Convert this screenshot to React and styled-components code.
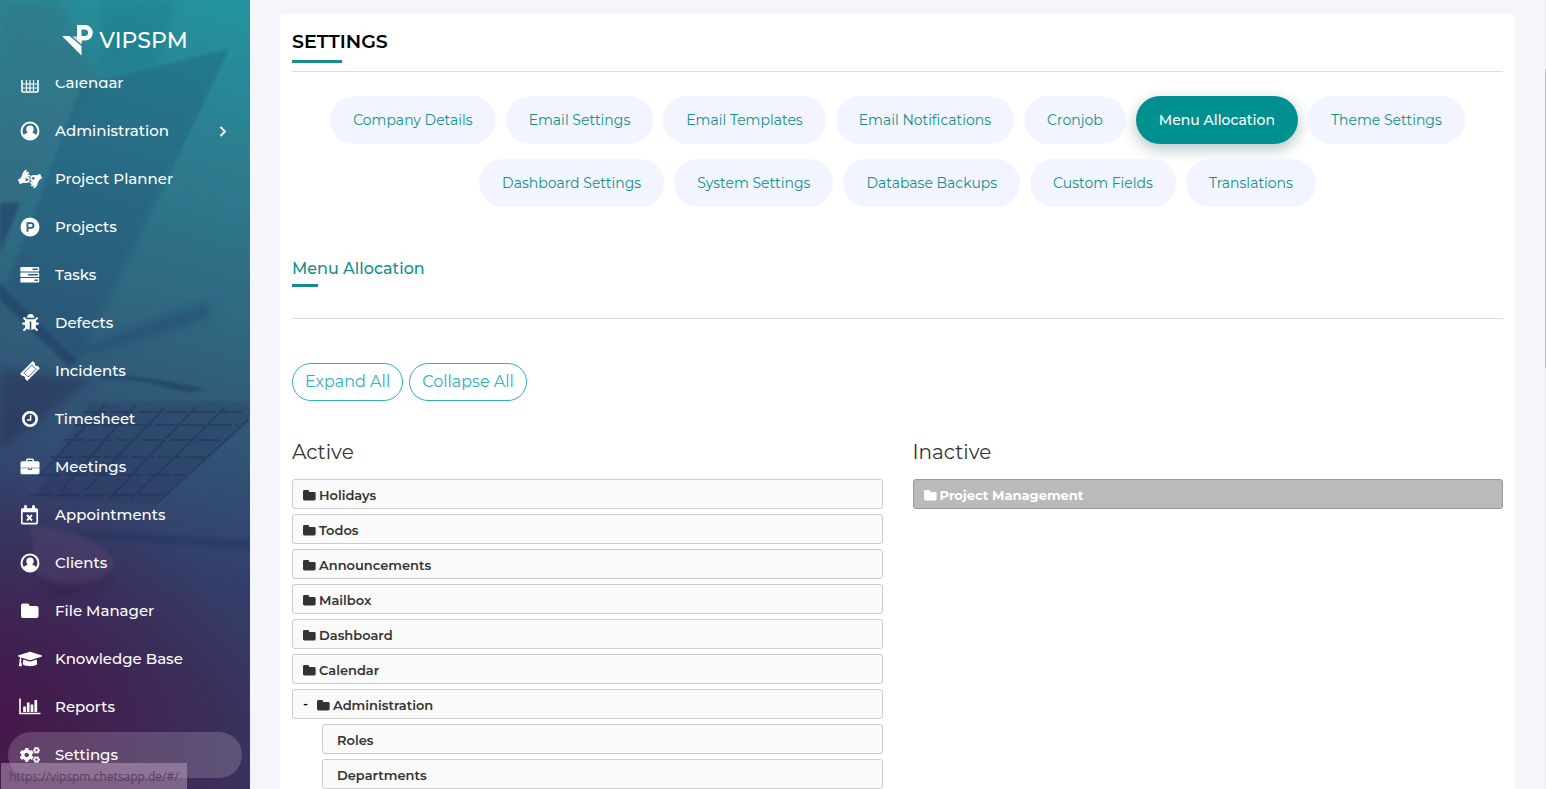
import { useState } from "react";
import styled, { createGlobalStyle } from "styled-components";
import {
  FaBug,
  FaGraduationCap,
  FaCogs,
  FaAmericanSignLanguageInterpreting,
} from "react-icons/fa";

const GlobalStyle = createGlobalStyle`
  * {
    box-sizing: border-box;
  }
  body {
    margin: 0;
    background: #f5f6fb;
    color: #333;
    font-family: Montserrat, Inter, "Liberation Sans", sans-serif;
    font-size: 15px;
    overflow: hidden;
  }
  ul {
    margin: 0;
    padding: 0;
    list-style: none;
  }
  button {
    font-family: inherit;
    cursor: pointer;
  }
`;

const Layout = styled.div`
  display: flex;
  height: 100vh;
`;

const Sidebar = styled.aside`
  position: relative;
  flex: 0 0 250px;
  display: flex;
  flex-direction: column;
  overflow: hidden;
  background:
    radial-gradient(circle at 0% 92%, rgba(72, 14, 66, 0.75), rgba(60, 15, 70, 0) 260px),
    linear-gradient(197deg, #23959c 0%, #2d7a8d 22%, #30607c 44%, #333f69 68%, #38345f 82%, #3d2f5c 100%);
`;

const Scene = styled.svg`
  position: absolute;
  inset: 0;
  width: 100%;
  height: 100%;
`;

const Brand = styled.a`
  position: relative;
  flex: 0 0 80px;
  display: flex;
  align-items: center;
  justify-content: center;
  gap: 6px;
  color: #fff;
  font-size: 22px;
  font-weight: 500;
  text-decoration: none;
`;

const Nav = styled.nav`
  position: relative;
  flex: 1;
  min-height: 0;
  overflow: hidden;
`;

// the list is scrolled a little, its first entry goes under the brand
const NavList = styled.ul`
  margin-top: -20px;
  display: flex;
  flex-direction: column;
  gap: 2px;
`;

const NavLink = styled.a`
  display: flex;
  align-items: center;
  gap: 15px;
  height: 46px;
  margin: 0 8px;
  padding: 0 14px 1px 12px;
  border-radius: 23px;
  background: ${(props) => (props.$active ? "rgba(255, 255, 255, 0.17)" : "transparent")};
  color: #fff;
  font-size: 15px;
  font-weight: 500;
  text-decoration: none;
`;

const NavIcon = styled.span`
  flex: 0 0 20px;
  min-width: 0;
  display: flex;
  justify-content: center;

  svg {
    flex: none;
  }
`;

const NavText = styled.span`
  flex: 1;
`;

const StatusBar = styled.div`
  position: absolute;
  left: 1px;
  bottom: 0;
  width: 186px;
  height: 26px;
  padding-left: 8px;
  background: rgba(190, 160, 190, 0.5);
  color: #54405f;
  font-family: "Open Sans", "Noto Sans", sans-serif;
  font-size: 12px;
  line-height: 27px;
  white-space: nowrap;
`;

const Main = styled.main`
  flex: 1;
  min-width: 0;
  display: flex;
  flex-direction: column;
  padding: 14px 30px 0;
`;

const Card = styled.section`
  flex: 1;
  padding: 16px 12px 0;
  border-radius: 4px 4px 0 0;
  background: #fff;
`;

const PageHeader = styled.header`
  padding-bottom: 8px;
  border-bottom: 1px solid #ddd;
`;

const PageTitle = styled.h1`
  margin: 0;
  color: #000;
  font-size: 19px;
  font-weight: 600;
  line-height: 24px;

  &::after {
    content: "";
    display: block;
    width: 50px;
    height: 3px;
    margin-top: 6px;
    background: #148f8b;
  }
`;

const Tabs = styled.nav`
  display: flex;
  flex-wrap: wrap;
  justify-content: center;
  gap: 15px 10px;
  padding-top: 24px;
`;

const Tab = styled.a`
  padding: 0 23px;
  border-radius: 24px;
  background: ${(props) => (props.$active ? "#009090" : "#f2f5ff")};
  box-shadow: ${(props) => (props.$active ? "0 5px 15px rgba(0, 60, 50, 0.3)" : "none")};
  color: ${(props) => (props.$active ? "#fff" : "#148f8b")};
  font-size: 14px;
  font-weight: ${(props) => (props.$active ? 500 : 400)};
  line-height: 48px;
  text-decoration: none;
`;

const SectionHeader = styled.header`
  margin-top: 50px;
  padding-bottom: 31px;
  border-bottom: 1px solid #ddd;
`;

const SectionTitle = styled.h2`
  margin: 0;
  color: #148f8b;
  font-size: 16px;
  font-weight: 500;
  line-height: 24px;

  &::after {
    content: "";
    display: block;
    width: 26px;
    height: 3px;
    margin-top: 3px;
    background: #128c91;
  }
`;

const Actions = styled.div`
  display: flex;
  gap: 6px;
  margin-top: 44px;
`;

const OutlineButton = styled.button`
  height: 38px;
  padding: 0 12px 2px;
  border: 1px solid #2fb0c0;
  border-radius: 19px;
  background: transparent;
  color: #2fb0c4;
  font-size: 16px;
  font-weight: 400;
`;

const Columns = styled.div`
  display: grid;
  grid-template-columns: 1fr 1fr;
  gap: 30px;
  margin-top: 39px;
`;

const ColumnTitle = styled.h3`
  margin: 0 0 15px;
  font-size: 20px;
  font-weight: 400;
  line-height: 24px;
`;

const MenuTree = styled.ul`
  display: flex;
  flex-direction: column;
  gap: 5px;

  ul {
    margin: 5px 0 0 30px;
  }
`;

const MenuRow = styled.div`
  display: flex;
  align-items: center;
  gap: 3px;
  height: 30px;
  padding: 2px ${(props) => (props.$child ? 14 : 10)}px 0;
  border: 1px solid ${(props) => (props.$inactive ? "#999" : "#ccc")};
  border-radius: 3px;
  background: ${(props) => (props.$inactive ? "#bababa" : "#fafafa")};
  color: ${(props) => (props.$inactive ? "#fff" : "#333")};
  font-size: 13px;
  font-weight: ${(props) => (props.$inactive ? 700 : 600)};
`;

const Toggle = styled.button`
  width: 11px;
  height: 24px;
  padding: 0 0 4px;
  border: 0;
  background: none;
  color: #000;
  font-size: 13px;
  font-weight: 600;
  text-align: left;
`;

const ScrollTrack = styled.div`
  flex: 0 0 1px;
  padding-top: 69px;
  background: #ececf0;
`;

const ScrollThumb = styled.div`
  height: 299px;
  background: #c1c1c1;
`;

const Calendar = () => (
  <svg width="18" height="20" viewBox="0 0 18 20" fill="none" stroke="currentColor">
    <rect x="1" y="4" width="16" height="15" rx="1" strokeWidth="1.6" />
    <path d="M1 5h16" strokeWidth="3" />
    <path d="M5.500 7v11M9 7v11M12.500 7v11M2 11h14M2 15h14" strokeWidth="1.200" />
    <path d="M5 1v4M13 1v4" strokeWidth="2.400" strokeLinecap="round" />
  </svg>
);

const UserCircle = () => (
  <svg width="20" height="20" viewBox="0 0 20 20" fill="currentColor">
    <path
      fillRule="evenodd"
      d="M10 .5a9.500 9.500 0 1 0 0 19 9.500 9.500 0 0 0 0-19zM10 2.600a7.400 7.400 0 0 1 6.100 11.500c-1-1.300-2.200-2-3.500-2.100H7.400c-1.300.1-2.500.8-3.500 2.100A7.400 7.400 0 0 1 10 2.600z"
    />
    <circle cx="10" cy="8.300" r="3.700" />
    <path d="M7.500 11h5v2h-5z" />
  </svg>
);

const ProductMark = () => (
  <svg width="20" height="20" viewBox="0 0 20 20">
    <path
      fill="currentColor"
      fillRule="evenodd"
      d="M10 .5a9.500 9.500 0 1 0 0 19 9.500 9.500 0 0 0 0-19zM6.500 5.300h4.700a3.200 3.200 0 0 1 0 6.400H8.400v3H6.500zM8.400 7.100v2.800h2.700a1.400 1.400 0 0 0 0-2.800z"
    />
  </svg>
);

const TaskBars = () => (
  <svg width="20" height="16" viewBox="0 0 20 16">
    <path
      fill="currentColor"
      fillRule="evenodd"
      d="M1 0h17.500a.7.7 0 0 1 .7.700v3a.7.7 0 0 1-.7.700H1a.7.7 0 0 1-.7-.7v-3A.7.7 0 0 1 1 0zM12.500 1.500v1.400h5.300V1.500zM1 5.500h17.500a.7.7 0 0 1 .7.700v3a.7.7 0 0 1-.7.700H1a.7.7 0 0 1-.7-.7v-3a.7.7 0 0 1 .7-.7zM8 7v1.400h9.800V7zM1 11h17.500a.7.7 0 0 1 .7.700v3a.7.7 0 0 1-.7.700H1a.7.7 0 0 1-.7-.7v-3A.7.7 0 0 1 1 11zM14.500 12.500v1.400h3.300v-1.400z"
    />
  </svg>
);

const Ticket = () => (
  <svg width="20" height="20" viewBox="0 0 20 20">
    <g transform="rotate(-45 10 10)">
      <path
        fill="currentColor"
        d="M1 5h18v3.300a1.800 1.800 0 0 0 0 3.400V15H1v-3.300a1.800 1.800 0 0 0 0-3.400z"
      />
      <rect x="4.500" y="7" width="11" height="6" fill="none" stroke="#33536f" strokeWidth=".8" />
    </g>
  </svg>
);

const Clock = () => (
  <svg width="18" height="18" viewBox="0 0 18 18" fill="none" stroke="currentColor">
    <circle cx="9" cy="9" r="6.700" strokeWidth="2.600" />
    <path d="M9.600 5v5H6" strokeWidth="1.500" />
  </svg>
);

const Briefcase = () => (
  <svg width="20" height="18" viewBox="0 0 20 18">
    <path d="M6.700 4V2.200a1 1 0 0 1 1-1h4.600a1 1 0 0 1 1 1V4" fill="none" stroke="currentColor" strokeWidth="1.500" />
    <path
      fill="currentColor"
      d="M2 3.200h16a1.500 1.500 0 0 1 1.500 1.500v5H.5v-5A1.500 1.500 0 0 1 2 3.200zM.5 10.300h7.400v1.500h4.200v-1.500h7.400v4.500a1.500 1.500 0 0 1-1.500 1.500H2a1.500 1.500 0 0 1-1.500-1.500zM8.700 10.300h2.600v.8H8.700z"
    />
  </svg>
);

const CalendarCross = () => (
  <svg width="20" height="20" viewBox="0 0 20 20" fill="none" stroke="currentColor">
    <rect x="1.800" y="4" width="15.400" height="14.600" rx="1" strokeWidth="1.700" />
    <path d="M1.500 5.500h16" strokeWidth="3.500" />
    <path d="M5.500 1.500v4M13.500 1.500v4" strokeWidth="2.800" strokeLinecap="round" />
    <path d="M7 10l5 5.500M12 10l-5 5.500" strokeWidth="1.900" />
  </svg>
);

const Folder = ({ size = 18 }) => (
  <svg width={size} height={size} viewBox="0 0 18 18">
    <path
      fill="currentColor"
      d="M2 1.500h4.500a2 2 0 0 1 2 2V4h7a2 2 0 0 1 2 2v8a2 2 0 0 1-2 2H2a2 2 0 0 1-2-2V3.500a2 2 0 0 1 2-2z"
    />
  </svg>
);

const BarChart = () => (
  <svg width="22" height="17" viewBox="0 0 22 17" fill="none" stroke="currentColor">
    <path d="M1 .5V15.500h20.500" strokeWidth="1.600" />
    <path d="M5.500 14V8.500M9.200 14V4.500M13 14V6.500M16.800 14V2" strokeWidth="2.700" />
  </svg>
);

const Chevron = () => (
  <svg width="10" height="13" viewBox="0 0 10 13" fill="none" stroke="currentColor" strokeWidth="1.800">
    <path d="M2.500 3l4.500 4.500L2.500 12" />
  </svg>
);

const Logo = () => (
  <svg width="31" height="31" viewBox="0 0 31 31">
    <path fill="#fff" d="M0 11h7.500L19.500 21V30.500z" />
    <path fill="#d5d3dc" d="M10 11.500h6l3.500 3V19.500z" />
    <path
      fill="#fff"
      fillRule="evenodd"
      d="M15 0h8a7.600 7.600 0 0 1 0 15.600h-3.500V18.500L15 15zM19.500 4.500v6.600h3.200a3.300 3.300 0 0 0 0-6.600z"
    />
  </svg>
);

// dimmed desk and laptop behind the menu
const Backdrop = () => (
  <Scene viewBox="0 0 250 789" preserveAspectRatio="none" aria-hidden="true">
    <defs>
      <filter id="soft" x="-20%" y="-20%" width="140%" height="140%">
        <feGaussianBlur stdDeviation="1.5" />
      </filter>
      <filter id="softer" x="-30%" y="-30%" width="160%" height="160%">
        <feGaussianBlur stdDeviation="5" />
      </filter>
    </defs>
    <path d="M60 0L100 80 0 230V0z" fill="#3d6580" opacity=".3" filter="url(#softer)" />
    <path d="M102 0h75l-20 65-58 10z" fill="#176f80" opacity=".25" filter="url(#softer)" />
    <path d="M226 50L82 84 22 245 0 300V282L75 362z" fill="#123e68" opacity=".22" filter="url(#soft)" />
    <path d="M227 50L132 250 78 362" fill="none" stroke="#144f68" strokeWidth="2" opacity=".4" filter="url(#soft)" />
    <path d="M0 203l20 0-20 50z" fill="#1b2855" opacity=".4" filter="url(#soft)" />
    <path d="M0 284L76 360 70 367 0 300z" fill="#192a54" opacity=".4" filter="url(#soft)" />
    <path d="M78 350L212 302 205 318 90 353z" fill="#183d61" opacity=".4" filter="url(#softer)" />
    <path d="M100 375c30 0 50 4 70 7l35 7-14 3c-14-1-24-4-36-8-18-4-38-5-55-5z" fill="#17314f" opacity=".45" filter="url(#soft)" />
    <path d="M90 402H250V420L154 505 35 497z" fill="#202750" opacity=".2" filter="url(#soft)" />
    <g stroke="#1c2c55" strokeWidth="2" opacity=".4" fill="none">
      <path d="M84 412H244M74 425H238M62 440H225M50 457H208M38 475H185M30 495H165" strokeDasharray="23 4" />
      <path d="M105 405L40 475M135 405L60 492M164 408L86 490M195 408L108 500M225 408L130 500M248 420L155 505" />
    </g>
    <path d="M0 370L95 378 0 450z" fill="#282650" opacity=".4" filter="url(#softer)" />
    <path d="M30 525C70 530 110 545 115 562c-8 25-48 27-78 14z" fill="#6c507c" opacity=".25" filter="url(#soft)" />
    <path d="M75 530L250 540V550L90 538z" fill="#1b3157" opacity=".4" filter="url(#soft)" />
    <path d="M35 578C65 592 90 588 110 575L105 586 60 598z" fill="#291841" opacity=".4" filter="url(#softer)" />
  </Scene>
);

const navItems = [
  { text: "Calendar", icon: <Calendar /> },
  { text: "Administration", icon: <UserCircle />, more: true },
  { text: "Project Planner", icon: <FaAmericanSignLanguageInterpreting size={24} /> },
  { text: "Projects", icon: <ProductMark /> },
  { text: "Tasks", icon: <TaskBars /> },
  { text: "Defects", icon: <FaBug size={17} /> },
  { text: "Incidents", icon: <Ticket /> },
  { text: "Timesheet", icon: <Clock /> },
  { text: "Meetings", icon: <Briefcase /> },
  { text: "Appointments", icon: <CalendarCross /> },
  { text: "Clients", icon: <UserCircle /> },
  { text: "File Manager", icon: <Folder /> },
  { text: "Knowledge Base", icon: <FaGraduationCap size={24} /> },
  { text: "Reports", icon: <BarChart /> },
  { text: "Settings", icon: <FaCogs size={20} />, active: true },
];

const tabs = [
  "Company Details",
  "Email Settings",
  "Email Templates",
  "Email Notifications",
  "Cronjob",
  "Menu Allocation",
  "Theme Settings",
  "Dashboard Settings",
  "System Settings",
  "Database Backups",
  "Custom Fields",
  "Translations",
];

const activeMenus = [
  { name: "Holidays" },
  { name: "Todos" },
  { name: "Announcements" },
  { name: "Mailbox" },
  { name: "Dashboard" },
  { name: "Calendar" },
  { name: "Administration", children: ["Roles", "Departments"] },
];

const App = () => {
  const [open, setOpen] = useState(true);

  return (
    <Layout>
      <GlobalStyle />
      <Sidebar>
        <Backdrop />
        <Brand href="#/">
          <Logo />
          VIPSPM
        </Brand>
        <Nav>
          <NavList>
            {navItems.map((item) => (
              <li key={item.text}>
                <NavLink href="#/" $active={item.active}>
                  <NavIcon>{item.icon}</NavIcon>
                  <NavText>{item.text}</NavText>
                  {item.more && <Chevron />}
                </NavLink>
              </li>
            ))}
          </NavList>
        </Nav>
        <StatusBar>https://vipspm.chetsapp.de/#/</StatusBar>
      </Sidebar>
      <Main>
        <Card>
          <PageHeader>
            <PageTitle>SETTINGS</PageTitle>
          </PageHeader>
          <Tabs>
            {tabs.map((tab) => (
              <Tab key={tab} href="#/" $active={tab === "Menu Allocation"}>
                {tab}
              </Tab>
            ))}
          </Tabs>
          <SectionHeader>
            <SectionTitle>Menu Allocation</SectionTitle>
          </SectionHeader>
          <Actions>
            <OutlineButton type="button" onClick={() => setOpen(true)}>Expand All</OutlineButton>
            <OutlineButton type="button" onClick={() => setOpen(false)}>Collapse All</OutlineButton>
          </Actions>
          <Columns>
            <div>
              <ColumnTitle>Active</ColumnTitle>
              <MenuTree>
                {activeMenus.map((menu) => (
                  <li key={menu.name}>
                    <MenuRow>
                      {menu.children && (
                        <Toggle type="button" aria-expanded={open} onClick={() => setOpen(!open)}>
                          {open ? "-" : "+"}
                        </Toggle>
                      )}
                      <Folder size={13} />
                      {menu.name}
                    </MenuRow>
                    {menu.children && open && (
                      <MenuTree>
                        {menu.children.map((child) => (
                          <li key={child}>
                            <MenuRow $child>{child}</MenuRow>
                          </li>
                        ))}
                      </MenuTree>
                    )}
                  </li>
                ))}
              </MenuTree>
            </div>
            <div>
              <ColumnTitle>Inactive</ColumnTitle>
              <MenuTree>
                <li>
                  <MenuRow $inactive>
                    <Folder size={13} />
                    Project Management
                  </MenuRow>
                </li>
              </MenuTree>
            </div>
          </Columns>
        </Card>
      </Main>
      <ScrollTrack>
        <ScrollThumb />
      </ScrollTrack>
    </Layout>
  );
};

export default App;
